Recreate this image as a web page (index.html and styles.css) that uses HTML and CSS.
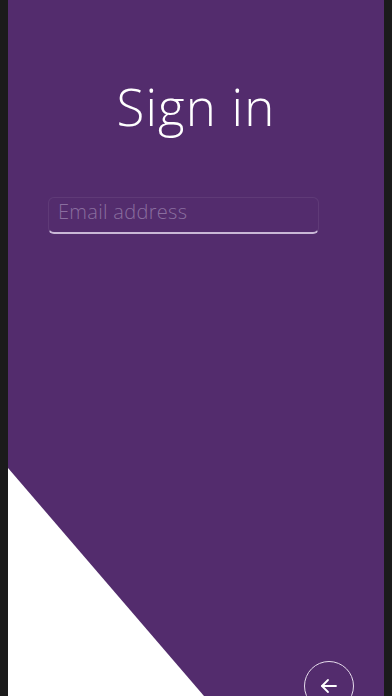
FILE: index.html
```html
<!DOCTYPE html>
<html lang="en">
<head>
    <meta charset="UTF-8">
    <meta name="viewport" content="width=device-width, initial-scale=1.0">
    <title>Sign in</title>
    <link rel="stylesheet" href="styles.css">
</head>
<body>
    <div class="screen">
        <h1 class="title">Sign in</h1>

        <!-- Email field -->
        <div class="field">
            <input type="email" class="field-input" placeholder="Email address">
        </div>

        <!-- Decorative corner -->
        <div class="corner"></div>

        <button class="back-btn" aria-label="Back">
            <svg width="20" height="20" viewBox="0 0 20 20" fill="none" stroke="#fff" stroke-width="1.8" stroke-linecap="round" stroke-linejoin="round">
                <path d="M17 10H3"/>
                <path d="M9 4L3 10l6 6"/>
            </svg>
        </button>
    </div>
</body>
</html>
```

FILE: styles.css
```css
/* Global reset and basic styling */
body {
    margin: 0;
    padding: 0;
    background: #1b1b1b;
    font-family: 'Open Sans', 'Noto Sans', sans-serif;
}

.screen {
    position: relative;
    width: 376px;
    height: 696px;
    margin: 0 auto;
    background-color: #532c6d;
    overflow: hidden;
}

.title {
    margin: 0;
    padding-top: 73px;
    font-size: 51px;
    font-weight: 300;
    line-height: 66px;
    color: #fff;
    text-align: center;
    letter-spacing: 1.2px;
}

.field {
    margin: 58px 0 0 40px;
    width: 271px;
}

.field-input {
    display: block;
    width: 100%;
    height: 37px;
    box-sizing: border-box;
    padding: 0 9px 8px;
    background: transparent;
    border: 1px solid rgba(255, 255, 255, 0.07);
    border-bottom: 2px solid #c9b8d6;
    border-radius: 6px;
    font-family: 'Open Sans', 'Noto Sans', sans-serif;
    font-size: 20px;
    font-weight: 300;
    letter-spacing: 0.3px;
    color: #fff;
    outline: none;
}

.field-input::placeholder {
    color: #8a6e9f;
}

.corner {
    position: absolute;
    left: 0;
    bottom: 0;
    width: 196px;
    height: 228px;
    background: #fff;
    clip-path: polygon(0 0, 100% 100%, 0 100%);
}

.back-btn {
    position: absolute;
    left: 296px;
    top: 661px;
    width: 50px;
    height: 50px;
    padding: 0;
    border: 1.5px solid #e6dcec;
    border-radius: 50%;
    background: transparent;
    display: flex;
    align-items: center;
    justify-content: center;
    cursor: pointer;
}

.back-btn svg {
    margin-top: -1px;
}
```
